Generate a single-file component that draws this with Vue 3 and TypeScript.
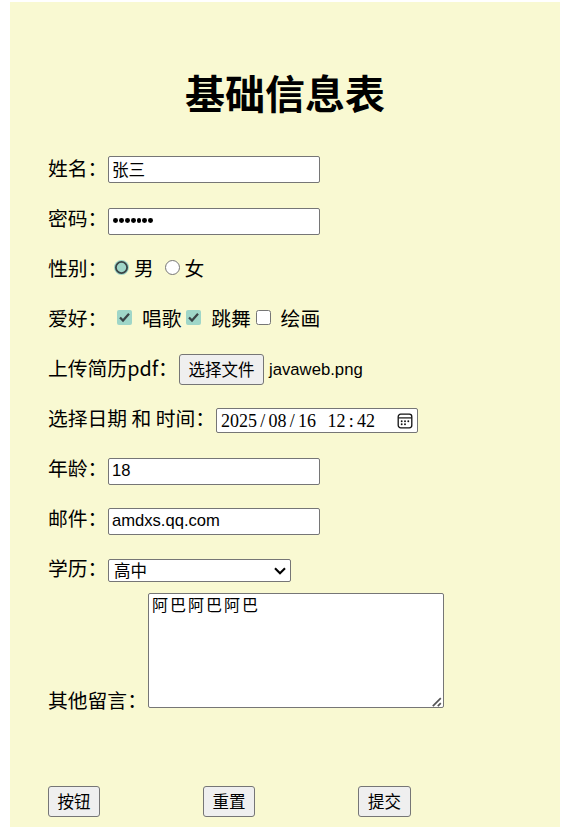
<script setup lang="ts">
import { ref } from 'vue'

const name = ref('张三')
const password = ref('1234567')
const age = ref('18')
const email = ref('amdxs.qq.com')
const message = ref('阿巴阿巴阿巴')
const gender = ref('男')
const dateParts = ['2025', '/', '08', '/', '16', ' ', '12', ':', '42']
const hobbies = ref([
  { label: '唱歌', checked: true },
  { label: '跳舞', checked: true },
  { label: '绘画', checked: false },
])
const actions = ['按钮', '重置', '提交']
</script>

<template>
  <main class="page">
    <form class="form" @submit.prevent>
      <h1>基础信息表</h1>
      <div class="row first">
        <label>姓名：</label><input v-model="name" class="field" type="text" />
      </div>
      <div class="row">
        <label>密码：</label>
        <div class="field password"><i v-for="n in password.length" :key="n"></i></div>
      </div>
      <div class="row">
        <label>性别：</label>
        <div class="radios">
          <span v-for="g in ['男', '女']" :key="g" class="radio" @click="gender = g">
            <svg width="15" height="15" viewBox="0 0 15 15">
              <template v-if="gender === g">
                <circle cx="7.5" cy="7.5" r="7.5" fill="#9fd6c8" />
                <circle cx="7.5" cy="7.5" r="5.6" fill="none" stroke="#3a4446" stroke-width="1.8" />
              </template>
              <circle v-else cx="7.5" cy="7.5" r="7" fill="#fff" stroke="#767676" />
            </svg>{{ g }}
          </span>
        </div>
      </div>
      <div class="row">
        <label>爱好：</label>
        <div class="checks">
          <span v-for="h in hobbies" :key="h.label" class="check" @click="h.checked = !h.checked">
            <svg width="15" height="15" viewBox="0 0 15 15">
              <template v-if="h.checked">
                <rect width="15" height="15" rx="2" fill="#9fd6c8" />
                <path d="M3 7.5 6 10.6 12 3.8" fill="none" stroke="#3a4446" stroke-width="2.2" />
              </template>
              <rect v-else x=".5" y=".5" width="14" height="14" rx="2" fill="#fff" stroke="#767676" />
            </svg>{{ h.label }}
          </span>
        </div>
      </div>
      <div class="row">
        <label class="file-label">上传简历pdf：</label>
        <button class="btn file" type="button">选择文件</button>
        <span class="filename">javaweb.png</span>
      </div>
      <div class="row">
        <label class="date-label">选择日期 和 时间：</label>
        <div class="date">
          <div class="value">
            <span v-for="(p, i) in dateParts" :key="i" :class="{ sep: i % 2 === 1 }">{{ p }}</span>
          </div>
          <svg width="16" height="16" viewBox="0 0 16 16">
            <rect x="1.2" y="1.2" width="13.6" height="13.6" rx="2.5" fill="none" stroke="#111" stroke-width="1.3" />
            <path d="M1.5 4.9h13" stroke="#111" stroke-width="1.2" />
            <g fill="#111">
              <circle cx="4.7" cy="8.2" r=".95" /><circle cx="8" cy="8.2" r=".95" /><circle cx="11.3" cy="8.2" r=".95" />
              <circle cx="4.7" cy="11.3" r=".95" /><circle cx="8" cy="11.3" r=".95" />
            </g>
          </svg>
        </div>
      </div>
      <div class="row">
        <label>年龄：</label><input v-model="age" class="field low" type="text" />
      </div>
      <div class="row">
        <label>邮件：</label><input v-model="email" class="field low" type="text" />
      </div>
      <div class="row last">
        <label>学历：</label>
        <div class="select">
          <span>高中</span>
          <svg width="12" height="8" viewBox="0 0 12 8"><path d="M1 1.2 6 6.2 11 1.2" fill="none" stroke="#000" stroke-width="2.1" /></svg>
        </div>
      </div>
      <div class="message">
        <label>其他留言：</label>
        <div class="area">
          <textarea v-model="message" spellcheck="false"></textarea>
          <svg class="grip" width="10" height="10" viewBox="0 0 10 10"><path d="M.8 9.2 8.8 1.2M5.8 9.2 8.8 6.2" stroke="#555" stroke-width="1.7" /></svg>
        </div>
      </div>
      <div class="actions">
        <button v-for="a in actions" :key="a" class="btn" type="button">{{ a }}</button>
      </div>
    </form>
  </main>
</template>

<style>
body { background: #fff; overflow: hidden; }
</style>

<style scoped>
* { box-sizing: border-box; }
.page { padding: 2px 17px 0 10px; height: 827px; }
.form {
  height: 825px;
  padding: 60px 38px 0;
  background: #f9f9d2;
  color: #000;
  font: 19.8px/30px "Noto Sans CJK SC", sans-serif;
}
h1 { height: 60px; margin: 0; text-align: center; font-size: 40px; line-height: 60px; font-weight: 700; }
.row { display: flex; align-items: flex-start; height: 50px; white-space: nowrap; }
.first { margin-top: 22px; }
.row label { flex: none; width: 60px; padding-top: 9px; }
.row .file-label { width: 131px; }
.row .date-label { width: 168px; }
.field {
  width: 212px; height: 27px; margin: 14px 0 0; padding: 1px 3px;
  border: 1px solid #767676; border-radius: 2px; outline: 0; background: #fff; color: #000;
  font: 16.6px "Liberation Sans", "Noto Sans CJK SC", sans-serif;
}
.first .field { margin-top: 12px; padding-bottom: 3px; }
.low { padding-bottom: 3px; }
.password { display: flex; align-items: center; gap: 1px; padding: 0 3px 2px 4px; }
.password i { width: 4.9px; height: 4.9px; border-radius: 50%; background: #000; }
.radios, .checks { display: flex; padding: 9px 0 0 6px; }
.radio { display: flex; gap: 5px; width: 50.5px; }
.radio svg { margin-top: 7px; }
.checks { padding-left: 9px; gap: 4.9px; }
.check { display: flex; gap: 9.9px; }
.check svg { margin-top: 7px; }
.btn {
  width: 52px; height: 31px; padding: 0; border: 1px solid #767676; border-radius: 3px;
  background: #efefef; color: #000; font: 16.5px/29px "Noto Sans CJK SC", sans-serif;
}
.file { width: 85px; margin: 10px 0 0; }
.filename { margin: 11px 0 0 5px; font: 16.7px/30px "Liberation Sans", sans-serif; }
.date {
  display: flex; align-items: center; justify-content: space-between; width: 202px; height: 25px; margin-top: 14px;
  padding: 0 4px; border: 1px solid #767676; border-radius: 2px; background: #fff;
}
.value { display: flex; white-space: pre; font: 18px/22px "Liberation Serif", serif; }
.sep { width: 11.5px; text-align: center; }
.select {
  display: flex; align-items: center; justify-content: space-between; width: 183px; height: 23px; margin-top: 15px;
  padding: 0 4px 0 5px; border: 1px solid #767676; border-radius: 2px; background: #fff;
  font-size: 16.5px; line-height: 20px;
}
.select span { height: 21px; }
.last { height: 49px; }
.message { display: flex; height: 115px; }
.message label { width: 100px; padding-top: 92px; }
.area { position: relative; width: 296px; height: 115px; }
textarea {
  display: block; width: 296px; height: 115px; padding: 0 3px; border: 1px solid #767676; border-radius: 2px;
  outline: 0; resize: none; background: #fff; color: #000; letter-spacing: 2px;
  font: 16px/20px "Noto Sans CJK SC", sans-serif;
}
.grip { position: absolute; right: 2px; bottom: 1px; }
.actions { display: flex; gap: 103px; margin-top: 78px; }
.actions .btn:last-child { width: 53px; }
</style>
